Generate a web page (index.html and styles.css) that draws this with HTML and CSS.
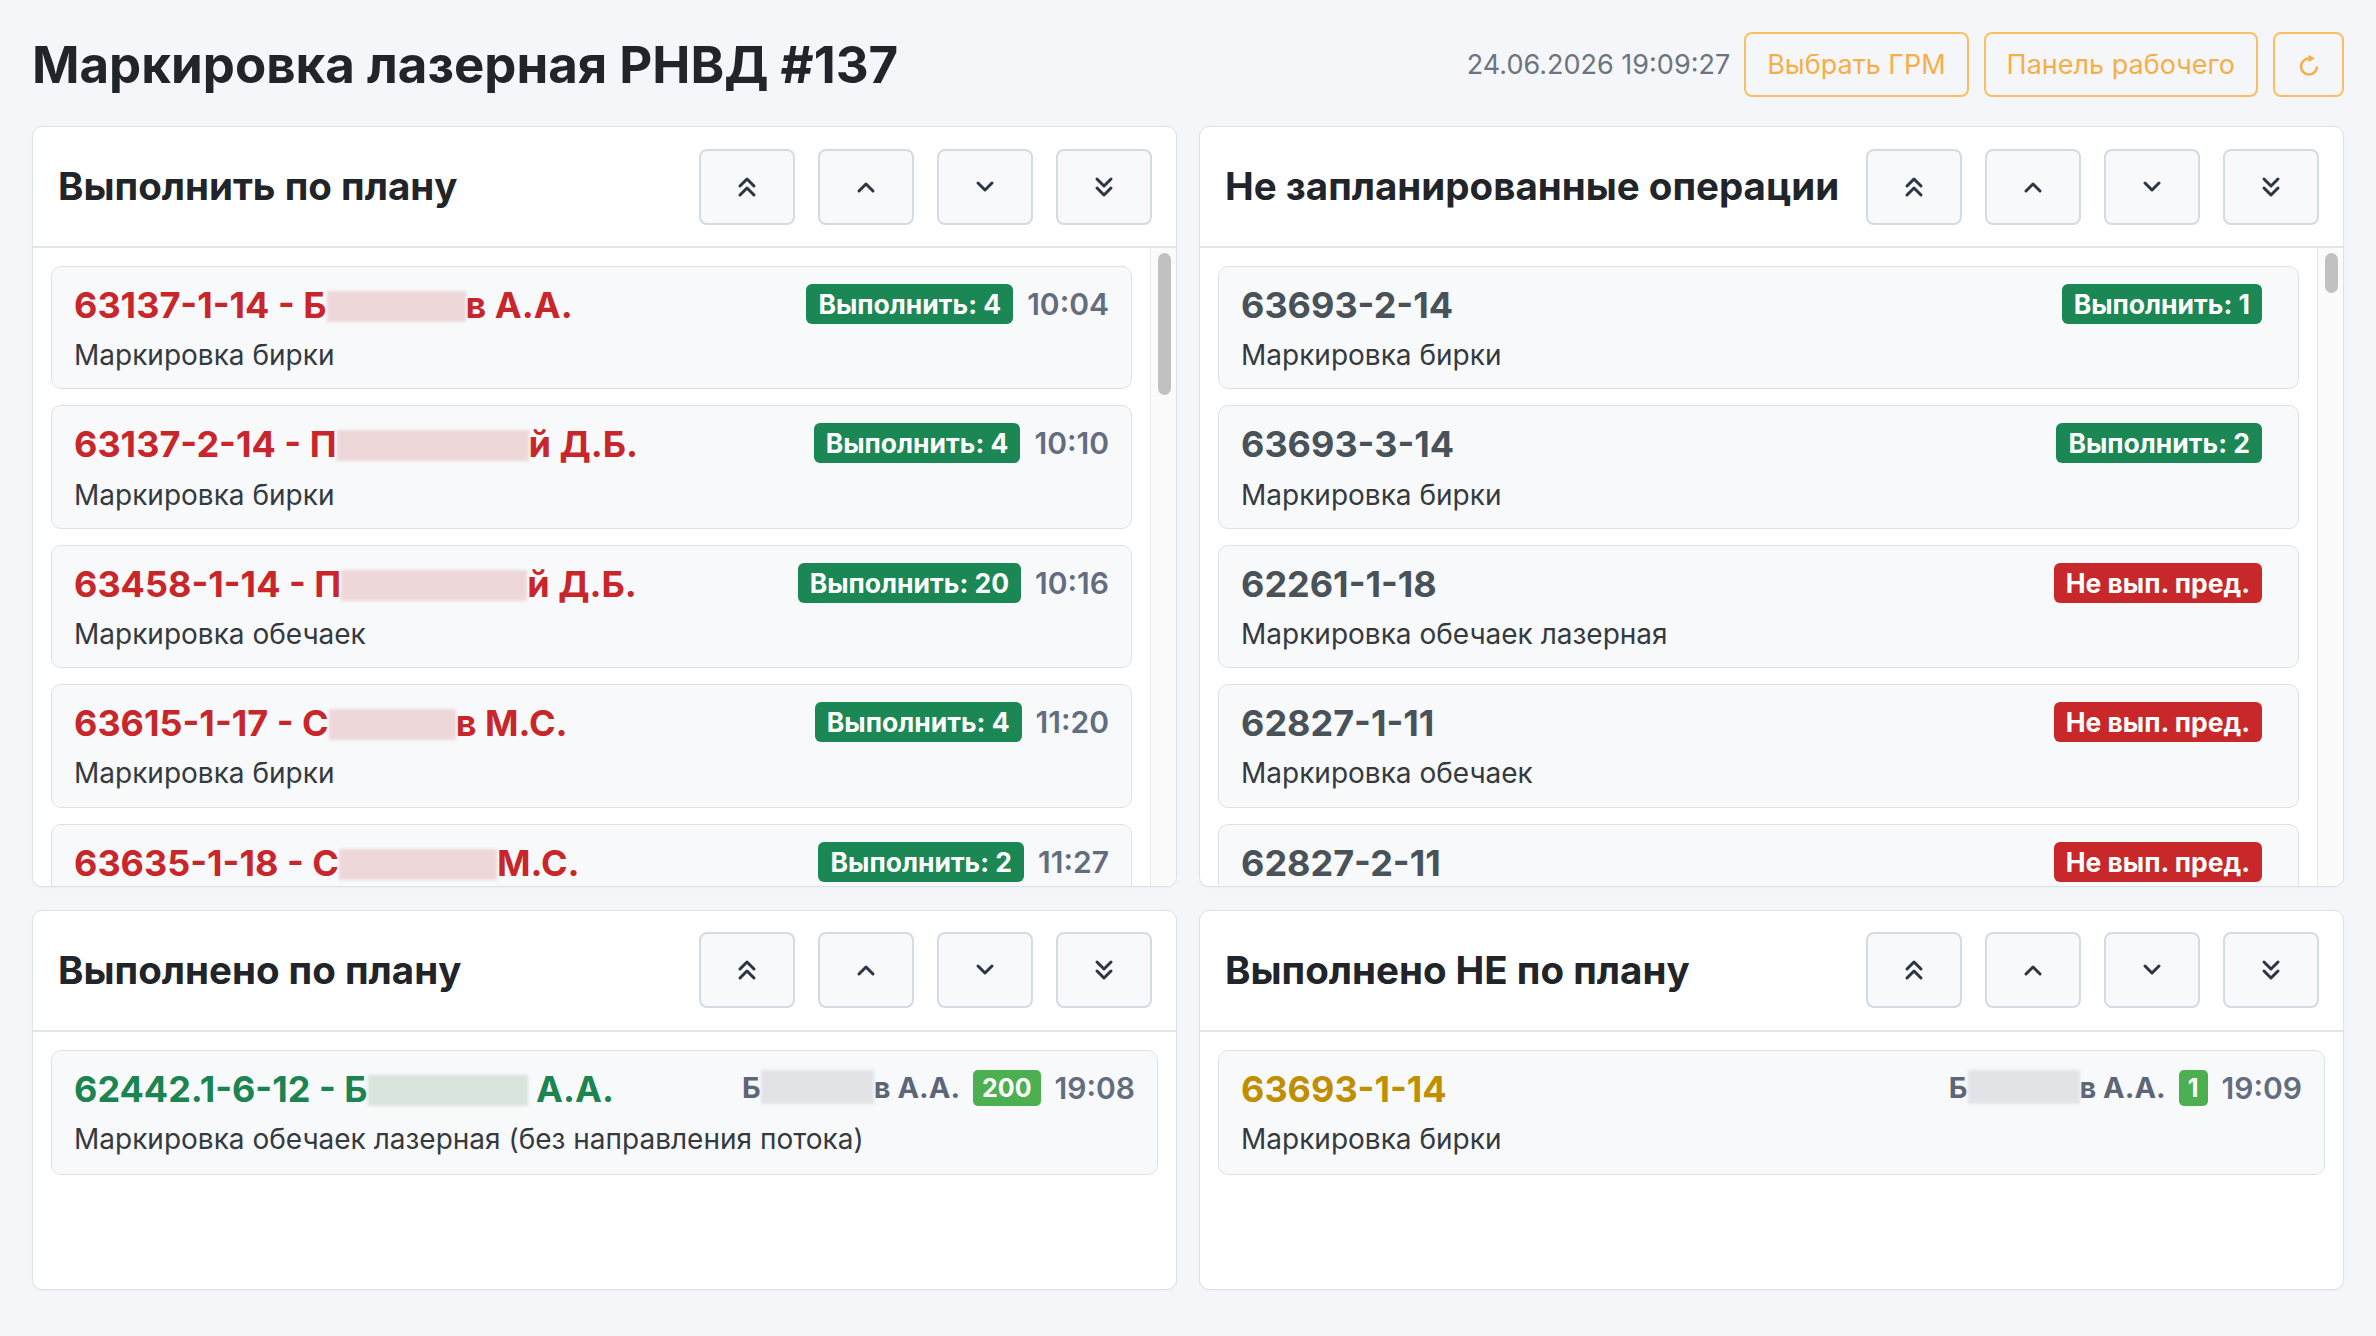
FILE: index.html
```html
<!DOCTYPE html>
<html lang="ru">
<head>
<meta charset="utf-8">
<title>Маркировка лазерная РНВД #137</title>
<link rel="stylesheet" href="styles.css">
</head>
<body>
<div class="page">
  <header class="topbar">
    <h1 class="page-title">Маркировка лазерная РНВД #137</h1>
    <div class="top-actions">
      <span class="clock">24.06.2026 19:09:27</span>
      <button class="btn-outline">Выбрать ГРМ</button>
      <button class="btn-outline">Панель рабочего</button>
      <button class="btn-outline btn-icon" aria-label="Обновить">
        <svg width="22" height="22" viewBox="0 0 22 22"><path d="M19 12.5A8 8 0 1 1 11 4.5" fill="none" stroke="currentColor" stroke-width="2.6"/><polygon points="10.5,0.8 16.8,4.5 10.5,8.2" fill="currentColor"/></svg>
      </button>
    </div>
  </header>

  <main class="board">
    <!-- Panel 1 -->
    <section class="panel">
      <div class="panel-head">
        <h2 class="panel-title">Выполнить по плану</h2>
        <div class="nav-btns">
          <button class="nav-btn"><svg width="20" height="24" viewBox="0 0 20 24" fill="none" stroke="currentColor" stroke-width="3" stroke-linecap="round" stroke-linejoin="round"><polyline points="3,11 10,4 17,11"/><polyline points="3,20 10,13 17,20"/></svg></button>
          <button class="nav-btn"><svg width="20" height="14" viewBox="0 0 20 14" fill="none" stroke="currentColor" stroke-width="3" stroke-linecap="round" stroke-linejoin="round"><polyline points="3,11 10,4 17,11"/></svg></button>
          <button class="nav-btn"><svg width="20" height="14" viewBox="0 0 20 14" fill="none" stroke="currentColor" stroke-width="3" stroke-linecap="round" stroke-linejoin="round"><polyline points="3,3 10,10 17,3"/></svg></button>
          <button class="nav-btn"><svg width="20" height="24" viewBox="0 0 20 24" fill="none" stroke="currentColor" stroke-width="3" stroke-linecap="round" stroke-linejoin="round"><polyline points="3,4 10,11 17,4"/><polyline points="3,13 10,20 17,13"/></svg></button>
        </div>
      </div>
      <div class="panel-body">
        <div class="panel-list">
          <div class="op-card">
            <div class="op-main">
              <div class="op-title t-red">63137-1-14 - Б<span class="redact redact-pink w139"></span>в А.А.</div>
              <div class="op-sub">Маркировка бирки</div>
            </div>
            <div class="op-side">
              <span class="badge badge-green">Выполнить: 4</span>
              <span class="op-time">10:04</span>
            </div>
          </div>
          <div class="op-card">
            <div class="op-main">
              <div class="op-title t-red">63137-2-14 - П<span class="redact redact-pink w192"></span>й Д.Б.</div>
              <div class="op-sub">Маркировка бирки</div>
            </div>
            <div class="op-side">
              <span class="badge badge-green">Выполнить: 4</span>
              <span class="op-time">10:10</span>
            </div>
          </div>
          <div class="op-card">
            <div class="op-main">
              <div class="op-title t-red">63458-1-14 - П<span class="redact redact-pink w186"></span>й Д.Б.</div>
              <div class="op-sub">Маркировка обечаек</div>
            </div>
            <div class="op-side">
              <span class="badge badge-green">Выполнить: 20</span>
              <span class="op-time">10:16</span>
            </div>
          </div>
          <div class="op-card">
            <div class="op-main">
              <div class="op-title t-red">63615-1-17 - С<span class="redact redact-pink w127"></span>в М.С.</div>
              <div class="op-sub">Маркировка бирки</div>
            </div>
            <div class="op-side">
              <span class="badge badge-green">Выполнить: 4</span>
              <span class="op-time">11:20</span>
            </div>
          </div>
          <div class="op-card">
            <div class="op-main">
              <div class="op-title t-red">63635-1-18 - С<span class="redact redact-pink w158"></span>М.С.</div>
              <div class="op-sub">Маркировка бирки</div>
            </div>
            <div class="op-side">
              <span class="badge badge-green">Выполнить: 2</span>
              <span class="op-time">11:27</span>
            </div>
          </div>
        </div>
        <div class="scrollbar"><div class="scroll-thumb thumb-plan"></div></div>
      </div>
    </section>

    <!-- Panel 2 -->
    <section class="panel">
      <div class="panel-head">
        <h2 class="panel-title">Не запланированные операции</h2>
        <div class="nav-btns">
          <button class="nav-btn"><svg width="20" height="24" viewBox="0 0 20 24" fill="none" stroke="currentColor" stroke-width="3" stroke-linecap="round" stroke-linejoin="round"><polyline points="3,11 10,4 17,11"/><polyline points="3,20 10,13 17,20"/></svg></button>
          <button class="nav-btn"><svg width="20" height="14" viewBox="0 0 20 14" fill="none" stroke="currentColor" stroke-width="3" stroke-linecap="round" stroke-linejoin="round"><polyline points="3,11 10,4 17,11"/></svg></button>
          <button class="nav-btn"><svg width="20" height="14" viewBox="0 0 20 14" fill="none" stroke="currentColor" stroke-width="3" stroke-linecap="round" stroke-linejoin="round"><polyline points="3,3 10,10 17,3"/></svg></button>
          <button class="nav-btn"><svg width="20" height="24" viewBox="0 0 20 24" fill="none" stroke="currentColor" stroke-width="3" stroke-linecap="round" stroke-linejoin="round"><polyline points="3,4 10,11 17,4"/><polyline points="3,13 10,20 17,13"/></svg></button>
        </div>
      </div>
      <div class="panel-body">
        <div class="panel-list">
          <div class="op-card">
            <div class="op-main">
              <div class="op-title t-gray">63693-2-14</div>
              <div class="op-sub">Маркировка бирки</div>
            </div>
            <div class="op-side">
              <span class="badge badge-green">Выполнить: 1</span>
              <span class="op-time"></span>
            </div>
          </div>
          <div class="op-card">
            <div class="op-main">
              <div class="op-title t-gray">63693-3-14</div>
              <div class="op-sub">Маркировка бирки</div>
            </div>
            <div class="op-side">
              <span class="badge badge-green">Выполнить: 2</span>
              <span class="op-time"></span>
            </div>
          </div>
          <div class="op-card">
            <div class="op-main">
              <div class="op-title t-gray">62261-1-18</div>
              <div class="op-sub">Маркировка обечаек лазерная</div>
            </div>
            <div class="op-side">
              <span class="badge badge-red">Не вып. пред.</span>
              <span class="op-time"></span>
            </div>
          </div>
          <div class="op-card">
            <div class="op-main">
              <div class="op-title t-gray">62827-1-11</div>
              <div class="op-sub">Маркировка обечаек</div>
            </div>
            <div class="op-side">
              <span class="badge badge-red">Не вып. пред.</span>
              <span class="op-time"></span>
            </div>
          </div>
          <div class="op-card">
            <div class="op-main">
              <div class="op-title t-gray">62827-2-11</div>
              <div class="op-sub">Маркировка обечаек</div>
            </div>
            <div class="op-side">
              <span class="badge badge-red">Не вып. пред.</span>
              <span class="op-time"></span>
            </div>
          </div>
        </div>
        <div class="scrollbar"><div class="scroll-thumb thumb-unplanned"></div></div>
      </div>
    </section>

    <!-- Panel 3 -->
    <section class="panel">
      <div class="panel-head">
        <h2 class="panel-title">Выполнено по плану</h2>
        <div class="nav-btns">
          <button class="nav-btn"><svg width="20" height="24" viewBox="0 0 20 24" fill="none" stroke="currentColor" stroke-width="3" stroke-linecap="round" stroke-linejoin="round"><polyline points="3,11 10,4 17,11"/><polyline points="3,20 10,13 17,20"/></svg></button>
          <button class="nav-btn"><svg width="20" height="14" viewBox="0 0 20 14" fill="none" stroke="currentColor" stroke-width="3" stroke-linecap="round" stroke-linejoin="round"><polyline points="3,11 10,4 17,11"/></svg></button>
          <button class="nav-btn"><svg width="20" height="14" viewBox="0 0 20 14" fill="none" stroke="currentColor" stroke-width="3" stroke-linecap="round" stroke-linejoin="round"><polyline points="3,3 10,10 17,3"/></svg></button>
          <button class="nav-btn"><svg width="20" height="24" viewBox="0 0 20 24" fill="none" stroke="currentColor" stroke-width="3" stroke-linecap="round" stroke-linejoin="round"><polyline points="3,4 10,11 17,4"/><polyline points="3,13 10,20 17,13"/></svg></button>
        </div>
      </div>
      <div class="panel-body">
        <div class="panel-list">
          <div class="op-card op-card-done">
            <div class="op-main">
              <div class="op-title t-green">62442.1-6-12 - Б<span class="redact redact-green w160"></span> А.А.</div>
              <div class="op-sub">Маркировка обечаек лазерная (без направления потока)</div>
            </div>
            <div class="op-side">
              <span class="op-worker">Б<span class="redact redact-gray w113"></span>в А.А.</span>
              <span class="badge-sm">200</span>
              <span class="op-time">19:08</span>
            </div>
          </div>
        </div>
      </div>
    </section>

    <!-- Panel 4 -->
    <section class="panel">
      <div class="panel-head">
        <h2 class="panel-title">Выполнено НЕ по плану</h2>
        <div class="nav-btns">
          <button class="nav-btn"><svg width="20" height="24" viewBox="0 0 20 24" fill="none" stroke="currentColor" stroke-width="3" stroke-linecap="round" stroke-linejoin="round"><polyline points="3,11 10,4 17,11"/><polyline points="3,20 10,13 17,20"/></svg></button>
          <button class="nav-btn"><svg width="20" height="14" viewBox="0 0 20 14" fill="none" stroke="currentColor" stroke-width="3" stroke-linecap="round" stroke-linejoin="round"><polyline points="3,11 10,4 17,11"/></svg></button>
          <button class="nav-btn"><svg width="20" height="14" viewBox="0 0 20 14" fill="none" stroke="currentColor" stroke-width="3" stroke-linecap="round" stroke-linejoin="round"><polyline points="3,3 10,10 17,3"/></svg></button>
          <button class="nav-btn"><svg width="20" height="24" viewBox="0 0 20 24" fill="none" stroke="currentColor" stroke-width="3" stroke-linecap="round" stroke-linejoin="round"><polyline points="3,4 10,11 17,4"/><polyline points="3,13 10,20 17,13"/></svg></button>
        </div>
      </div>
      <div class="panel-body">
        <div class="panel-list">
          <div class="op-card op-card-done">
            <div class="op-main">
              <div class="op-title t-gold">63693-1-14</div>
              <div class="op-sub">Маркировка бирки</div>
            </div>
            <div class="op-side">
              <span class="op-worker">Б<span class="redact redact-gray w112"></span>в А.А.</span>
              <span class="badge-sm">1</span>
              <span class="op-time">19:09</span>
            </div>
          </div>
        </div>
      </div>
    </section>
  </main>
</div>
</body>
</html>
```

FILE: styles.css
```css
* { box-sizing: border-box; }

html, body {
  margin: 0;
  padding: 0;
}

body {
  background: #f5f6f9;
  font-family: "Inter", "Noto Sans", "Liberation Sans", sans-serif;
  color: #212529;
}

.page {
  height: 1336px;
  padding: 32px 32px 46px;
  display: flex;
  flex-direction: column;
}

/* ---------- top bar ---------- */
.topbar {
  flex: none;
  height: 65px;
  margin-bottom: 29px;
  display: flex;
  align-items: center;
  justify-content: space-between;
}

.page-title {
  margin: 0;
  font-size: 51px;
  font-weight: 700;
  line-height: 1.2;
  color: #212529;
}

.top-actions {
  display: flex;
  align-items: center;
  gap: 15px;
}

.clock {
  font-size: 27px;
  color: #6c757d;
  margin-right: -1px;
}

.btn-outline {
  height: 65px;
  padding: 0 21px;
  border: 2px solid #fdbe63;
  border-radius: 8px;
  background: transparent;
  color: #f8ae47;
  font-family: inherit;
  font-size: 27px;
  font-weight: 400;
  cursor: pointer;
}

.btn-icon {
  width: 71px;
  padding: 0;
  display: flex;
  align-items: center;
  justify-content: center;
}

/* ---------- board ---------- */
.board {
  flex: 1;
  min-height: 0;
  display: grid;
  grid-template-columns: 1fr 1fr;
  grid-template-rows: 2fr 1fr;
  gap: 23px 22px;
}

.panel {
  min-height: 0;
  background: #fff;
  border: 1px solid #dde2e8;
  border-radius: 10px;
  display: flex;
  flex-direction: column;
  overflow: hidden;
  box-shadow: 0 1px 2px rgba(30, 40, 60, 0.04);
}

.panel-head {
  flex: none;
  height: 121px;
  padding: 0 24px 0 25px;
  display: flex;
  align-items: center;
  gap: 23px;
  border-bottom: 2px solid #e2e6eb;
}

.panel-title {
  flex: 1;
  margin: 0;
  font-size: 38.5px;
  font-weight: 700;
  line-height: 1.2;
  color: #212529;
  white-space: nowrap;
}

.nav-btns {
  display: flex;
  gap: 23px;
}

.nav-btn {
  width: 96px;
  height: 76px;
  padding: 0;
  background: #f8f9fa;
  border: 2px solid #d4dbe4;
  border-radius: 8px;
  color: #2c3544;
  display: flex;
  align-items: center;
  justify-content: center;
  cursor: pointer;
}

.panel-body {
  flex: 1;
  min-height: 0;
  display: flex;
}

.panel-list {
  flex: 1;
  min-width: 0;
  overflow: hidden;
  padding: 18px;
  display: flex;
  flex-direction: column;
  gap: 16px;
}

/* scroll indicator of the long lists */
.scrollbar {
  flex: none;
  width: 26px;
  background: #fbfbfb;
  border-left: 1px solid #e9e9e9;
  padding: 5px 5px 0 7px;
}

.scroll-thumb {
  background: #c1c1c1;
  border-radius: 7px;
}

.thumb-plan { height: 142px; }
.thumb-unplanned { height: 40px; }

/* ---------- cards ---------- */
.op-card {
  flex: none;
  display: flex;
  justify-content: space-between;
  align-items: flex-start;
  gap: 16px;
  background: #f8f9fa;
  border: 1px solid #dde2e8;
  border-radius: 10px;
  padding: 17px 22px 13px;
}

.op-card-done {
  padding-bottom: 15px;
}

.op-main {
  min-width: 0;
}

.op-title {
  font-size: 36px;
  font-weight: 700;
  line-height: 1.2;
  white-space: nowrap;
}

.t-red { color: #c8262b; }
.t-gray { color: #4a5259; }
.t-green { color: #1b8450; }
.t-gold { color: #bf8f00; }

.op-sub {
  margin-top: 9px;
  font-size: 28px;
  line-height: 1.4;
  color: #343a40;
  white-space: nowrap;
}

.op-side {
  flex: none;
  display: flex;
  align-items: center;
  gap: 14px;
}

.badge {
  height: 40px;
  line-height: 40px;
  padding: 0 12px;
  border-radius: 6px;
  color: #fff;
  font-size: 26.5px;
  font-weight: 700;
  white-space: nowrap;
}

.badge-green { background: #1b8754; }
.badge-red { background: #c9282b; }

.badge-sm {
  height: 36px;
  line-height: 36px;
  padding: 0 9px;
  border-radius: 5px;
  background: #4caf50;
  color: #fff;
  font-size: 25px;
  font-weight: 700;
  margin-left: -1px;
}

.op-time {
  font-size: 30px;
  font-weight: 600;
  line-height: 40px;
  color: #626d7f;
}

.op-worker {
  font-size: 29px;
  font-weight: 700;
  line-height: 40px;
  color: #5d6677;
  white-space: nowrap;
}

/* redacted (blurred) name fragments */
.redact {
  display: inline-block;
  height: 31px;
  vertical-align: -4px;
  filter: blur(1.5px);
}

.op-worker .redact {
  height: 34px;
  vertical-align: -6px;
}

.redact-pink { background: #eed7d9; }
.redact-green { background: #d9e4dd; }
.redact-gray { background: #e2e3e7; }

.w112 { width: 112px; }
.w113 { width: 113px; }
.w127 { width: 127px; }
.w139 { width: 139px; }
.w158 { width: 158px; }
.w160 { width: 160px; }
.w186 { width: 186px; }
.w192 { width: 192px; }
```
